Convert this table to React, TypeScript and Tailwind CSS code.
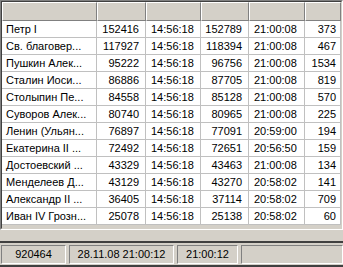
const COLS = [95, 49, 55, 48, 56, 36];

type Row = [string, string, string, string, string, string];

const ROWS: Row[] = [
  ["Петр I", "152416", "14:56:18", "152789", "21:00:08", "373"],
  ["Св. благовер...", "117927", "14:56:18", "118394", "21:00:08", "467"],
  ["Пушкин Алек...", "95222", "14:56:18", "96756", "21:00:08", "1534"],
  ["Сталин Иоси...", "86886", "14:56:18", "87705", "21:00:08", "819"],
  ["Столыпин Пе...", "84558", "14:56:18", "85128", "21:00:08", "570"],
  ["Суворов Алек...", "80740", "14:56:18", "80965", "21:00:08", "225"],
  ["Ленин (Ульян...", "76897", "14:56:18", "77091", "20:59:00", "194"],
  ["Екатерина II ...", "72492", "14:56:18", "72651", "20:56:50", "159"],
  ["Достоевский ...", "43329", "14:56:18", "43463", "21:00:08", "134"],
  ["Менделеев Д...", "43129", "14:56:18", "43270", "20:58:02", "141"],
  ["Александр II ...", "36405", "14:56:18", "37114", "20:58:02", "709"],
  ["Иван IV Грозн...", "25078", "14:56:18", "25138", "20:58:02", "60"],
];

// text alignment per column
const ALIGN = [
  "justify-start pl-[4px]",
  "justify-end pr-[6px]",
  "justify-start pl-[5px]",
  "justify-end pr-[6px]",
  "justify-start pl-[5px]",
  "justify-end pr-[4px]",
];

function StatusPanel({ w, text }: { w: number; text?: string }) {
  return (
    <div
      className="h-[19px] flex items-center justify-center border border-t-[#808080] border-l-[#808080] border-b-white border-r-white"
      style={{ width: w }}
    >
      {text}
    </div>
  );
}

export default function App() {
  return (
    <div className="w-[343px] h-[267px] bg-[#d4d0c8] flex flex-col text-[11px] text-black font-['Liberation_Sans',sans-serif] overflow-hidden">
      {/* grid */}
      <div className="h-[230px] border border-t-[#808080] border-l-[#808080] border-b-white border-r-white">
        <div className="h-full border border-t-[#404040] border-l-[#404040] border-b-[#d4d0c8] border-r-[#d4d0c8]">
          <div className="flex h-[19px]">
            {COLS.map((w, i) => (
              <div
                key={i}
                className="h-full bg-[#d4d0c8] border-l border-t border-l-white border-t-white border-r border-b border-r-[#808080] border-b-[#808080]"
                style={{ width: w }}
              />
            ))}
          </div>
          {ROWS.map((row, r) => (
            <div key={r} className="flex h-[17px] bg-white mt-0">
              {row.map((cell, c) => (
                <div
                  key={c}
                  className={`flex items-center h-full pt-[1px] whitespace-nowrap overflow-hidden border-r border-b border-[#c0c0c0] ${ALIGN[c]}`}
                  style={{ width: COLS[c] }}
                >
                  {cell}
                </div>
              ))}
            </div>
          ))}
        </div>
      </div>

      <div className="flex-1" />

      {/* status bar */}
      <div className="h-[26px] border-t-2 border-t-[#404040] flex flex-col">
        <div className="flex gap-[3px] pt-[2px] pl-[1px]">
          <StatusPanel w={65} text="920464" />
          <StatusPanel w={105} text="28.11.08 21:00:12" />
          <StatusPanel w={61} text="21:00:12" />
          <StatusPanel w={102} />
        </div>
        <div className="flex-1" />
        <div className="h-[2px] bg-[#404040]" />
      </div>
    </div>
  );
}
